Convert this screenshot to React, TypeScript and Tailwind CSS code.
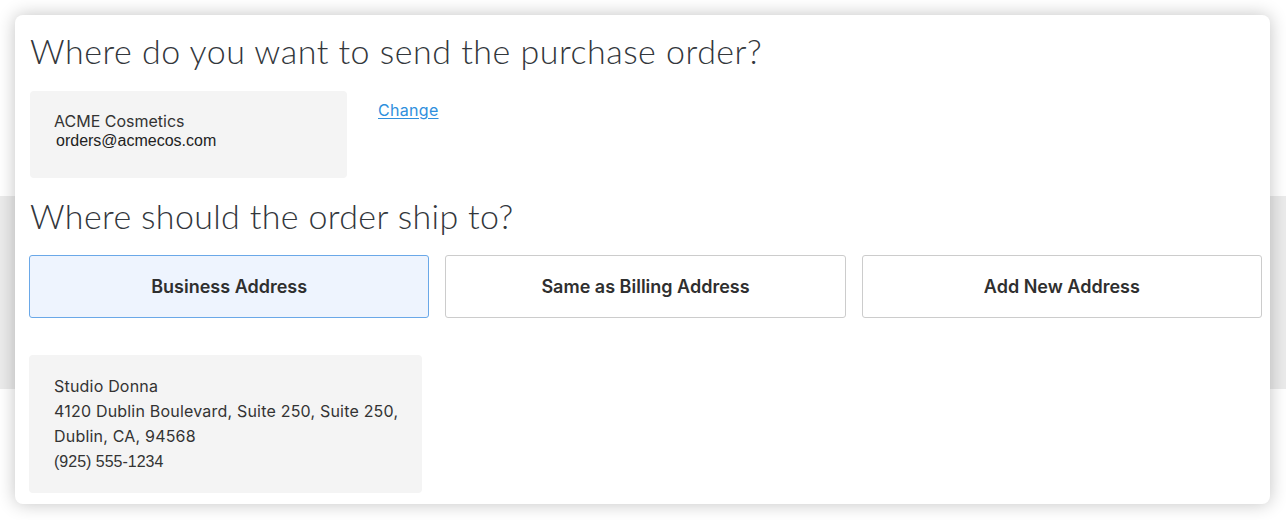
import React from "react";

const sans = "font-['Inter','Noto_Sans',sans-serif]";
const title = "font-['Lato','Noto_Sans',sans-serif]";
const arial = "font-['Liberation_Sans',Arial,sans-serif]";

export default function App() {
  return (
    <div className="w-[1286px] h-[520px] p-[15px] pr-[16px] bg-[linear-gradient(to_bottom,#ffffff_0px,#ffffff_196px,#ebebeb_196px,#ebebeb_389px,#ffffff_389px)]">
      <div className={`h-[489px] rounded-[8px] bg-white shadow-[0_0_18px_rgba(0,0,0,0.24)] pt-4 pl-[14px] pr-[8px] ${sans} text-[#333]`}>
        <h1 className={`${title} pl-px text-[34px] leading-[40px] font-light tracking-[0.5px] text-[#33373c]`}>
          Where do you want to send the purchase order?
        </h1>
        <div className="mt-5 flex items-start">
          <div className="ml-px w-[317px] h-[87px] rounded-[4px] bg-[#f4f4f4] pl-6 pt-5">
            <div className="text-[16px] leading-5 text-[#333]">ACME Cosmetics</div>
            <div className={`${arial} text-[16px] leading-5 pl-[2px] text-[#222]`}>orders@acmecos.com</div>
          </div>
          <a href="#" className="ml-[31px] mt-[9px] text-[16px] leading-5 tracking-[0.3px] text-[#2e8fdd] underline underline-offset-2">
            Change
          </a>
        </div>
        <h2 className={`${title} mt-[18px] pl-px text-[34px] leading-[40px] font-light tracking-[0.35px] text-[#33373c]`}>
          Where should the order ship to?
        </h2>
        <div className="mt-[19px] grid grid-cols-3 gap-4">
          <button className="h-[63px] rounded-[3px] border border-[#6aa8e8] bg-[#eef4fe] text-[18px] font-semibold text-[#2f2f2f]">
            Business Address
          </button>
          <button className="h-[63px] rounded-[3px] border border-[#cccccc] bg-white text-[18px] font-semibold text-[#2f2f2f]">
            Same as Billing Address
          </button>
          <button className="h-[63px] rounded-[3px] border border-[#cccccc] bg-white text-[18px] font-semibold text-[#2f2f2f]">
            Add New Address
          </button>
        </div>
        <div className="mt-[37px] w-[393px] h-[138px] rounded-[4px] bg-[#f4f4f4] pl-[25px] pt-[19px] text-[16px] leading-[25px] text-[#333]">
          <div className="tracking-[0.2px]">Studio Donna</div>
          <div className="tracking-[0.2px]">4120 Dublin Boulevard, Suite 250, Suite 250,</div>
          <div className="tracking-[0.2px]">Dublin, CA, 94568</div>
          <div className={arial}>(925) 555-1234</div>
        </div>
      </div>
    </div>
  );
}
